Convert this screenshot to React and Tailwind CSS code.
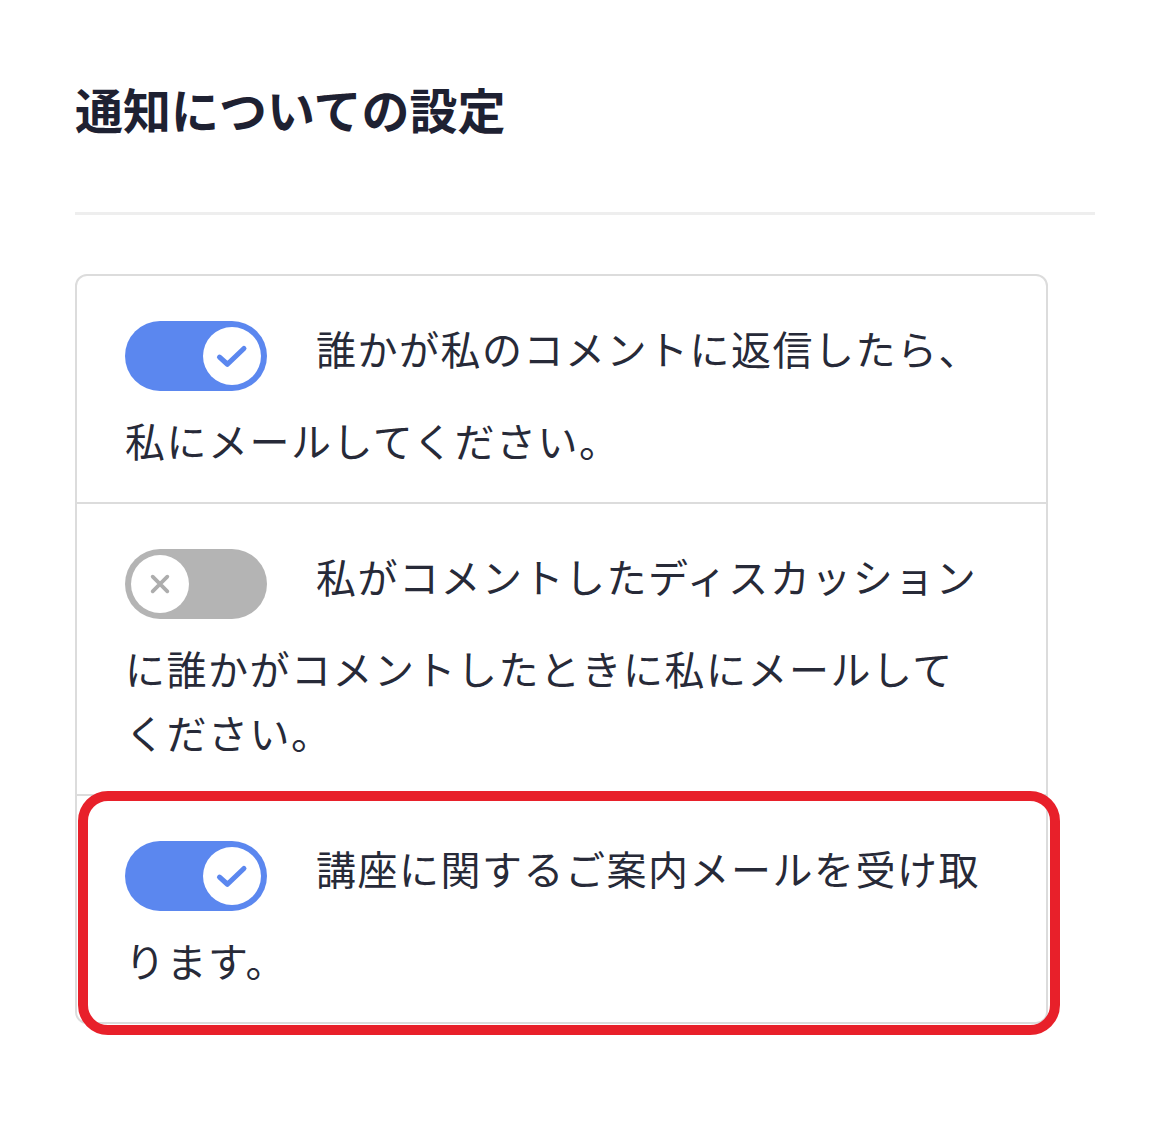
import { useState } from "react";

const settings = [
  {
    id: "reply",
    label: "誰かが私のコメントに返信したら、私にメールしてください。",
    on: true,
  },
  {
    id: "discussion",
    label:
      "私がコメントしたディスカッションに誰かがコメントしたときに私にメールしてください。",
    on: false,
  },
  {
    id: "course",
    label: "講座に関するご案内メールを受け取ります。",
    on: true,
    highlight: true,
  },
];

function Toggle({ on, onClick }) {
  return (
    <button
      type="button"
      onClick={onClick}
      className={`${
        on ? "bg-[#5b87ef] justify-end" : "bg-[#b4b4b4] justify-start"
      } inline-flex items-center align-middle w-[142px] h-[70px] rounded-full px-[6px] mr-[49px] mt-[20px] mb-[17px]`}
    >
      <span className="flex items-center justify-center w-[58px] h-[58px] rounded-full bg-white">
        {on ? (
          <svg width="44" height="44" viewBox="0 0 24 24" fill="none">
            <path
              d="M5.2 12.6l4.3 3.9 9-8.6"
              stroke="#5b87ef"
              strokeWidth="2.8"
              strokeLinecap="round"
              strokeLinejoin="round"
            />
          </svg>
        ) : (
          <svg width="32" height="32" viewBox="0 0 24 24" fill="none">
            <path
              d="M6.5 6.5l11 11M17.5 6.5l-11 11"
              stroke="#adadad"
              strokeWidth="2.8"
              strokeLinecap="round"
            />
          </svg>
        )}
      </span>
    </button>
  );
}

export default function App() {
  const [items, setItems] = useState(settings);

  function toggle(id) {
    setItems((prev) =>
      prev.map((item) => (item.id === id ? { ...item, on: !item.on } : item))
    );
  }

  return (
    <div
      className="min-h-screen bg-white px-[75px] pt-[80px] pb-[80px]"
      style={{ fontFamily: '"Noto Sans CJK JP", "Noto Sans", sans-serif' }}
    >
      <h1 className="text-[48px] leading-[56px] font-bold text-[#1e2132]">
        通知についての設定
      </h1>
      <div className="h-[3px] bg-[#eeeeee] mt-[76px] mb-[59px]"></div>
      <div className="w-[973px] border-2 border-[#dcdcdc] rounded-[12px]">
        {items.map((item, index) => (
          <div
            key={item.id}
            className={`${
              index > 0 ? "border-t-2 border-[#dcdcdc]" : ""
            } relative pl-[48px] pr-[56px] pt-[25px] pb-[30px] text-[40px] leading-[64px] tracking-[1.5px] text-[#272a38]`}
          >
            <Toggle on={item.on} onClick={() => toggle(item.id)} />
            {item.label}
            {item.highlight && (
              <div className="absolute left-[1px] -top-[5px] -right-[14px] -bottom-[13px] border-[10px] border-[#e8202a] rounded-[30px] pointer-events-none"></div>
            )}
          </div>
        ))}
      </div>
    </div>
  );
}
